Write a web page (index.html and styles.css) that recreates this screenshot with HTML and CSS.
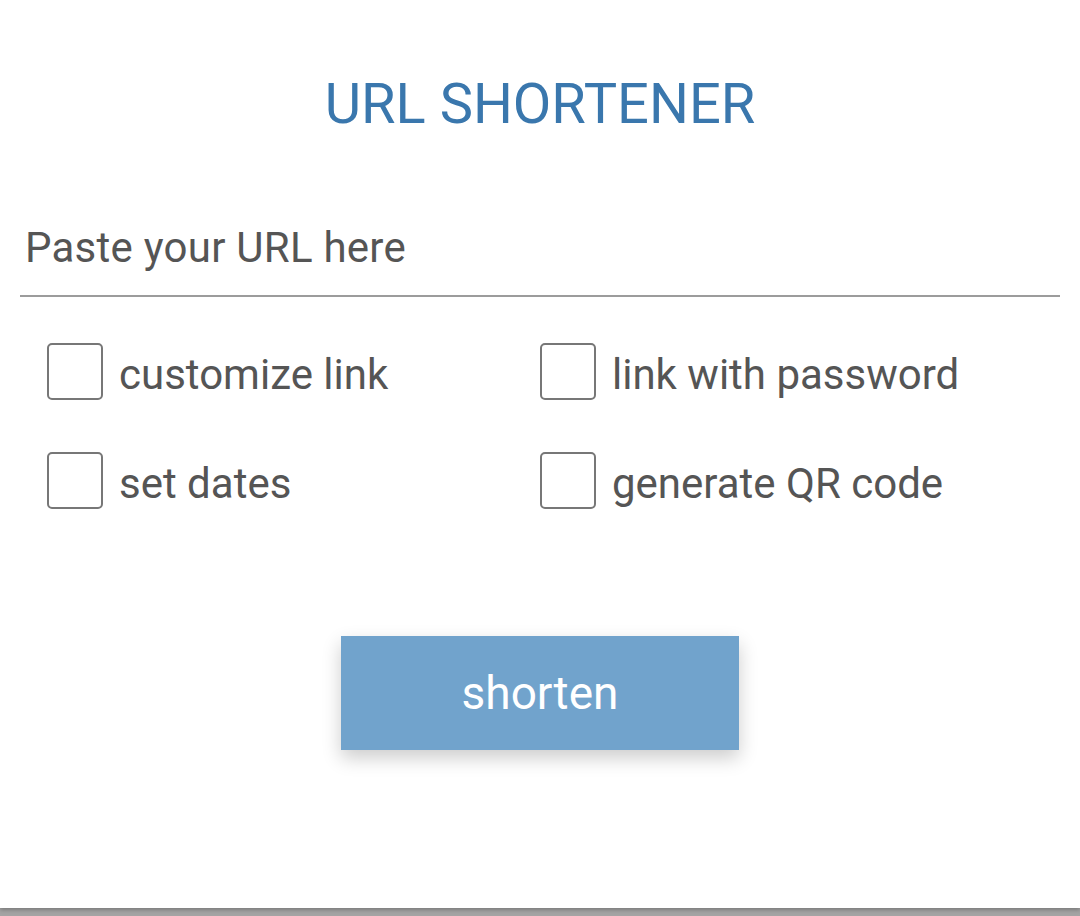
FILE: index.html
```html
<!DOCTYPE html>
<html>
<head>
<meta charset="utf-8">
<link rel="stylesheet" href="styles.css">
</head>
<body>
<main class="card">
  <h1 class="title">URL SHORTENER</h1>
  <div class="field">
    <input class="url-input" type="text" placeholder="Paste your URL here">
  </div>
  <div class="options">
    <label class="option"><span class="box"></span><span class="label">customize link</span></label>
    <label class="option"><span class="box"></span><span class="label">link with password</span></label>
    <label class="option"><span class="box"></span><span class="label">set dates</span></label>
    <label class="option"><span class="box"></span><span class="label">generate QR code</span></label>
  </div>
  <div class="actions">
    <button class="shorten" type="button">shorten</button>
  </div>
</main>
</body>
</html>
```

FILE: styles.css
```css
html, body {
  margin: 0;
  padding: 0;
}
body {
  background: #a4a4a4;
  height: 916px;
  overflow: hidden;
  font-family: Roboto, "Liberation Sans", sans-serif;
}
.card {
  background: #fff;
  height: 908px;
  box-shadow: 0 2px 4px rgba(0,0,0,0.25);
  padding: 0 20px;
  box-sizing: border-box;
  display: flex;
  flex-direction: column;
}
.title {
  margin: 72px 0 0;
  text-align: center;
  font-weight: 400;
  font-size: 56px;
  line-height: 64px;
  color: #3a77ad;
}
.field {
  margin-top: 81px;
  padding-bottom: 18px;
  border-bottom: 2px solid #9c9c9c;
}
.url-input {
  display: block;
  width: 100%;
  box-sizing: border-box;
  border: 0;
  outline: 0;
  padding: 0 5px;
  height: 60px;
  font-family: inherit;
  font-size: 42px;
  letter-spacing: 0.25px;
  color: #555;
  background: transparent;
}
.url-input::placeholder {
  color: #555;
}
.options {
  display: grid;
  grid-template-columns: 1fr 1fr;
  row-gap: 52px;
  padding: 0 27px;
  margin-top: 46px;
}
.option {
  display: flex;
  align-items: center;
  gap: 16px;
}
.box {
  width: 52px;
  height: 53px;
  border: 2px solid #777;
  border-radius: 5px;
  flex: none;
}
.label {
  font-size: 42px;
  color: #555;
  margin-top: 6px;
}
.actions {
  display: flex;
  justify-content: center;
  margin-top: 127px;
}
.shorten {
  width: 398px;
  height: 114px;
  border: 0;
  background: #71a3cc;
  color: #fff;
  font-family: inherit;
  font-size: 46px;
  padding: 0;
  box-shadow: 0 8px 18px rgba(0,0,0,0.2);
}
```
